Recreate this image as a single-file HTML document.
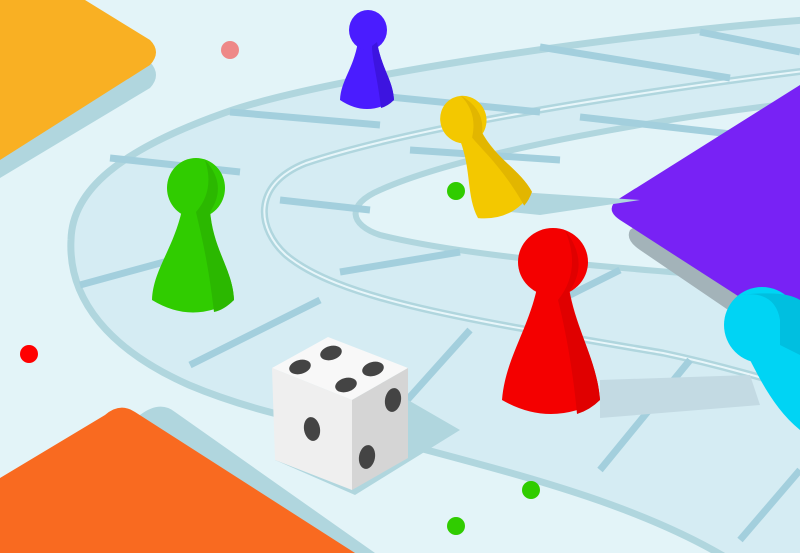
<!DOCTYPE html>
<html><head><meta charset="utf-8"><style>html,body{margin:0;padding:0;overflow:hidden}svg{display:block}</style></head>
<body>
<svg width="800" height="553" viewBox="0 0 800 553" xmlns="http://www.w3.org/2000/svg">
<rect width="800" height="553" fill="#e3f4f8"/>
<path d="M820,19 C650,30 330,75 224,113 C120,150 72,190 71,240 C68,300 110,350 189,385 C260,415 330,425 408,445 C520,475 640,505 730,560 L820,560 Z" fill="#d5ecf3" stroke="#b0d6de" stroke-width="7"/>
<path d="M820,69 C650,90 420,125 306,163 C250,185 258,230 286,255 C340,300 470,320 663,353 C720,365 770,380 820,395 Z" fill="#d5ecf3" stroke="#b0d6de" stroke-width="7"/>
<path d="M820,69 C650,90 420,125 306,163 C250,185 258,230 286,255 C340,300 470,320 663,353 C720,365 770,380 820,395" fill="none" stroke="#e8f6fa" stroke-width="2"/>
<path d="M820,100 C680,115 470,150 380,190 C345,205 350,225 380,235 C480,260 650,270 820,284 Z" fill="#e3f4f8" stroke="#b0d6de" stroke-width="6"/>
<g stroke="#a3cfdd" stroke-width="7" fill="none">
<line x1="700" y1="32" x2="800" y2="52"/>
<line x1="540" y1="47" x2="730" y2="78"/>
<line x1="230" y1="112" x2="380" y2="125"/>
<line x1="110" y1="158" x2="240" y2="172"/>
<line x1="80" y1="285" x2="190" y2="255"/>
<line x1="190" y1="365" x2="320" y2="300"/>
<line x1="400" y1="408" x2="470" y2="330"/>
<line x1="600" y1="470" x2="690" y2="360"/>
<line x1="740" y1="540" x2="800" y2="470"/>
<line x1="380" y1="96" x2="540" y2="112"/>
<line x1="580" y1="117" x2="740" y2="135"/>
<line x1="280" y1="200" x2="370" y2="210"/>
<line x1="410" y1="150" x2="560" y2="160"/>
<line x1="340" y1="272" x2="460" y2="252"/>
<line x1="560" y1="300" x2="620" y2="270"/>
</g>
<path d="M0,20 L100,20 L150,62 Q162,75 150,88 L0,178 Z" fill="#b0d6de"/>
<path d="M0,0 L85,0 L150,40 Q162,52 150,65 L0,160 Z" fill="#f9b023"/>
<path d="M140,415 Q160,400 175,412 L375,553 L20,553 Z" fill="#b0d6de"/>
<path d="M105,415 Q120,402 135,412 L355,553 L0,553 L0,478 Z" fill="#f96a20"/>
<path d="M630,230 L800,105 L800,350 L740,318 L640,250 Q625,240 630,230 Z" fill="#a3b3b9"/>
<path d="M617,200 L800,85 L800,325 L738,296 L620,220 Q605,210 617,200 Z" fill="#7822f5"/>
<path d="M600,380 L750,375 L760,405 L600,418 Z" fill="#c3dae3"/>
<path d="M490,190 L640,200 L540,215 L490,210 Z" fill="#b0d6de"/>
<path d="M275,460 L355,495 L460,430 L408,400 Z" fill="#b0d6de"/>
<circle cx="230" cy="50" r="9" fill="#ee8888"/>
<circle cx="456" cy="191" r="9" fill="#30cc00"/>
<circle cx="29" cy="354" r="9" fill="#f00"/>
<circle cx="531" cy="490" r="9" fill="#30cc00"/>
<circle cx="456" cy="526" r="9" fill="#30cc00"/>
<!-- blue -->
<path d="M358,42 C353,70 341,80 340,100 Q367,118 394,100 C393,80 382,70 377,42 Z" fill="#4a1cff"/>
<ellipse cx="368" cy="30" rx="19" ry="20" fill="#4a1cff"/>
<path d="M377,42 C382,70 393,80 394,100 Q388,106 381,108 C378,80 372,60 372,46 Z" fill="#3d14e0"/>
<!-- green -->
<path d="M182,210 C173,250 153,270 152,300 Q193,325 234,300 C233,270 213,250 210,210 Z" fill="#30cc00"/>
<ellipse cx="196" cy="188" rx="29" ry="30" fill="#30cc00"/>
<path d="M205,160 Q228,185 210,212 C213,250 233,270 234,300 Q224,310 214,312 C208,260 200,230 196,212 Q215,190 205,160 Z" fill="#2bb800"/>
<!-- yellow -->
<g transform="translate(505,205) rotate(-26)">
<path d="M-12,-78 C-15,-45 -31,-25 -30,0 Q0,18 30,0 C29,-25 12,-45 11,-78 Z" fill="#f3c800"/>
<ellipse cx="0" cy="-95" rx="23" ry="24" fill="#f3c800"/>
<path d="M8,-118 Q24,-95 11,-75 C12,-45 29,-25 30,0 Q24,6 17,9 C14,-35 5,-55 0,-75 Q16,-95 8,-118 Z" fill="#e2b600"/>
</g>
<!-- red -->
<path d="M537,288 C528,330 505,360 502,400 Q551,428 600,400 C597,360 576,330 569,288 Z" fill="#f40000"/>
<ellipse cx="553" cy="262" rx="35" ry="34" fill="#f40000"/>
<path d="M565,230 Q590,262 569,292 C576,330 597,360 600,400 Q590,410 577,414 C572,360 563,320 558,300 Q582,270 565,230 Z" fill="#e00000"/>
<!-- cyan -->
<path d="M745,350 C760,380 775,410 800,430 L800,350 Z" fill="#00d4f4"/>
<circle cx="762" cy="325" r="38" fill="#00d4f4"/>
<path d="M740,295 Q775,290 780,320 L780,345 L800,355 L800,300 Q785,290 740,295 Z" fill="#00bfe0"/>
<!-- dice -->
<path d="M272,368 L328,337 L408,368 L352,400 Z" fill="#f8f8f8"/>
<path d="M272,368 L352,400 L352,490 L275,460 Z" fill="#efefef"/>
<path d="M352,400 L408,368 L408,458 L352,490 Z" fill="#d5d5d5"/>
<g fill="#444">
<ellipse cx="331" cy="353" rx="11" ry="7" transform="rotate(-15 331 353)"/>
<ellipse cx="300" cy="367" rx="11" ry="7" transform="rotate(-15 300 367)"/>
<ellipse cx="373" cy="369" rx="11" ry="7" transform="rotate(-15 373 369)"/>
<ellipse cx="346" cy="385" rx="11" ry="7" transform="rotate(-15 346 385)"/>
<ellipse cx="312" cy="429" rx="8" ry="12" transform="rotate(-10 312 429)"/>
<ellipse cx="393" cy="400" rx="8" ry="12" transform="rotate(10 393 400)"/>
<ellipse cx="367" cy="457" rx="8" ry="12" transform="rotate(10 367 457)"/>
</g>
</svg>
</body></html>
